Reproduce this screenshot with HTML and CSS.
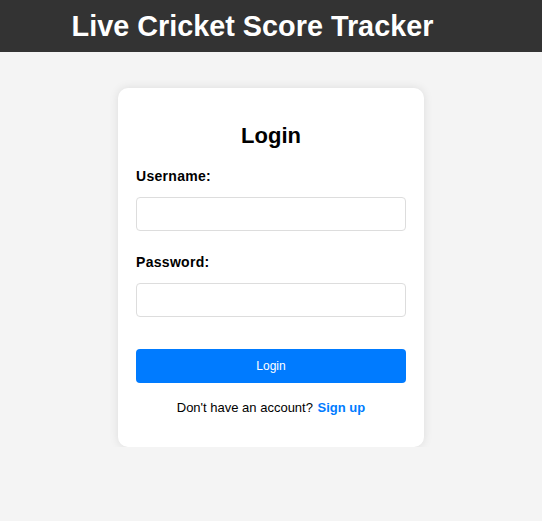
FILE: index.html
```html
<!DOCTYPE html>
<html lang="en">
<head>
<meta charset="utf-8">
<title>Live Cricket Score Tracker</title>
<link rel="stylesheet" href="styles.css">
</head>
<body>
<header class="site-header">
  <h1 class="site-title">Live Cricket Score Tracker</h1>
</header>
<main class="page">
  <form class="card">
    <h2 class="card-title">Login</h2>
    <label class="field-label" for="username">Username:</label>
    <input class="field-input" id="username" type="text">
    <label class="field-label field-label--second" for="password">Password:</label>
    <input class="field-input" id="password" type="password">
    <button class="submit-btn" type="button">Login</button>
    <p class="signup-text">Don't have an account? <a class="signup-link" href="#">Sign up</a></p>
  </form>
</main>
</body>
</html>
```
FILE: styles.css
```css
* { box-sizing: border-box; }
html, body {
  margin: 0;
  padding: 0;
  background: #f4f4f4;
  font-family: "Liberation Sans", Arial, sans-serif;
  color: #000;
}
.site-header {
  background: #333;
  height: 52px;
  display: flex;
  align-items: center;
  justify-content: center;
  padding-right: 37px;
}
.site-title {
  margin: 0;
  color: #fff;
  font-size: 28.8px;
  font-weight: bold;
  line-height: 1;
}
.page {
  display: flex;
  justify-content: center;
  padding-top: 36px;
}
.card {
  width: 306px;
  background: #fff;
  border-radius: 10px;
  box-shadow: 0 0 10px rgba(0, 0, 0, 0.1);
  padding: 35px 18px 31px;
  display: flex;
  flex-direction: column;
}
.card-title {
  margin: 0;
  text-align: center;
  font-size: 22px;
  line-height: 26px;
  font-weight: bold;
}
.field-label {
  margin-top: 19px;
  font-size: 14px;
  line-height: 16px;
  font-weight: bold;
  letter-spacing: 0.3px;
}
.field-label--second { margin-top: 23px; }
.field-input {
  margin-top: 13px;
  height: 34px;
  width: 100%;
  border: 1px solid #ddd;
  border-radius: 4px;
  background: #fff;
  font-size: 14px;
  padding: 0 8px;
}
.submit-btn {
  margin-top: 32px;
  height: 34px;
  width: 100%;
  border: none;
  border-radius: 4px;
  background: #007bff;
  color: #fff;
  font-family: "Liberation Sans", Arial, sans-serif;
  font-size: 12px;
  cursor: pointer;
}
.signup-text {
  margin: 17px 0 0;
  text-align: center;
  font-size: 13px;
  line-height: 16px;
}
.signup-link {
  color: #007bff;
  font-weight: bold;
  text-decoration: none;
  margin-left: 1px;
}
```
